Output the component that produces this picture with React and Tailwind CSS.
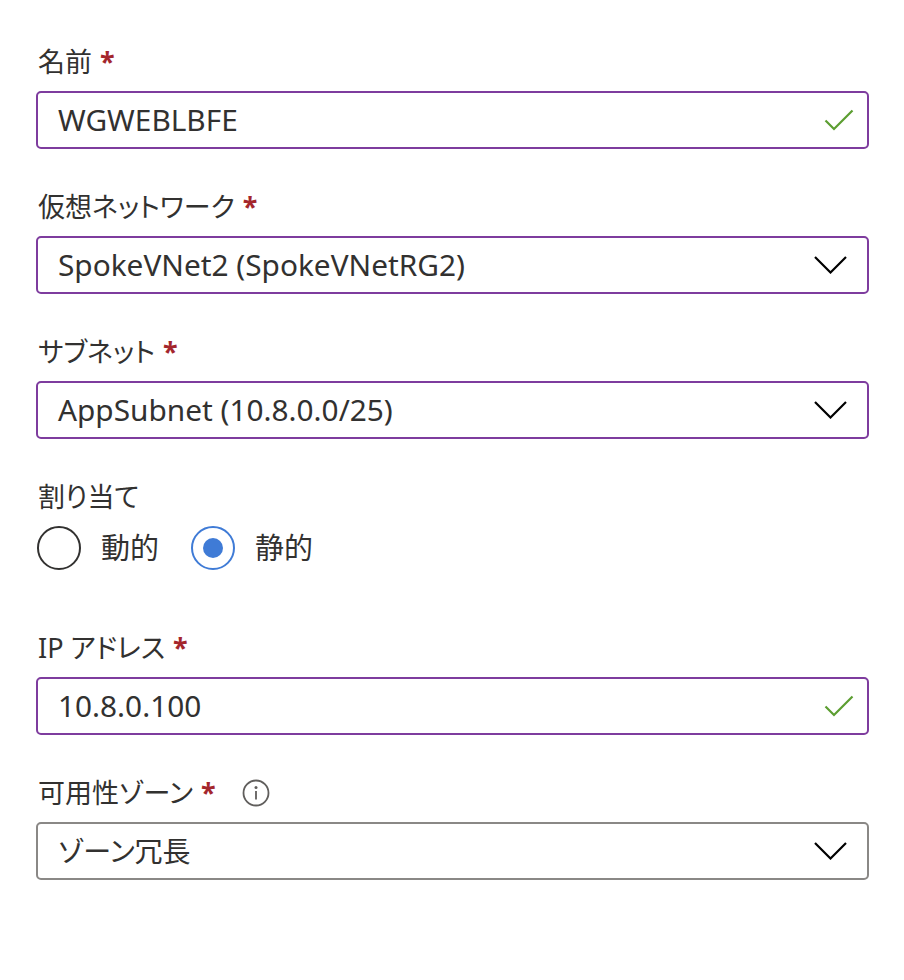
import React from "react";

const font = {
  fontFamily: '"Noto Sans", "Noto Sans CJK JP", sans-serif',
};

function Star() {
  return <span className="ml-[8px] text-[#a4262c] font-bold">*</span>;
}

function Label({ children, required = true, info = false }) {
  return (
    <div className="flex items-center h-[36px] text-[27px] leading-[36px] text-[#323130] [font-feature-settings:'palt']">
      <span>{children}</span>
      {required && <Star />}
      {info && (
        <svg width="28" height="28" viewBox="0 0 28 28" className="ml-[26px]">
          <circle cx="14" cy="14" r="12.5" fill="none" stroke="#605e5c" strokeWidth="1.8" />
          <circle cx="14" cy="8.6" r="1.5" fill="#605e5c" />
          <line x1="14" y1="12" x2="14" y2="20.5" stroke="#605e5c" strokeWidth="1.8" />
        </svg>
      )}
    </div>
  );
}

function Check() {
  return (
    <svg width="30" height="22" viewBox="0 0 30 22" className="mr-[13px]">
      <polyline points="1.5,11.5 10,20 28.5,1.5" fill="none" stroke="#5c9e31" strokeWidth="2.2" />
    </svg>
  );
}

function Chevron() {
  return (
    <svg width="33" height="18" viewBox="0 0 33 18" className="mr-[20px]">
      <polyline points="1,1 16.5,16.5 32,1" fill="none" stroke="#000000" strokeWidth="2.2" />
    </svg>
  );
}

function Box({ children, right, gray = false, cjk = false }) {
  return (
    <div
      className={
        "mt-[11px] h-[58px] w-[833px] rounded-[5px] border-2 flex items-center justify-between pl-[20px] text-[#323130] [font-feature-settings:'palt'] " +
        (cjk ? "text-[28px] " : "text-[29.8px] ") +
        (gray ? "border-[#8a8886]" : "border-[#7e3c9e]")
      }
    >
      <span>{children}</span>
      {right}
    </div>
  );
}

function Radio({ checked, label }) {
  return (
    <div className="flex items-center">
      {checked ? (
        <div className="w-[44px] h-[44px] rounded-full border-2 border-[#3f7bd6] flex items-center justify-center">
          <div className="w-[20px] h-[20px] rounded-full bg-[#3f7bd6]" />
        </div>
      ) : (
        <div className="w-[44px] h-[44px] rounded-full border-2 border-[#323130]" />
      )}
      <span className="ml-[20px] text-[29px] text-[#323130]">{label}</span>
    </div>
  );
}

export default function App() {
  return (
    <div className="w-[904px] h-[980px] bg-white pt-[44px] pl-[36px]" style={font}>
      <div className="pl-[2px]">
        <Label>名前</Label>
      </div>
      <Box right={<Check />}>WGWEBLBFE</Box>

      <div className="mt-[40px] pl-[2px]">
        <Label>仮想ネットワーク</Label>
      </div>
      <Box right={<Chevron />}>SpokeVNet2 (SpokeVNetRG2)</Box>

      <div className="mt-[40px] pl-[2px]">
        <Label>サブネット</Label>
      </div>
      <Box right={<Chevron />}>AppSubnet (10.8.0.0/25)</Box>

      <div className="mt-[40px] pl-[2px]">
        <Label required={false}>割り当て</Label>
      </div>
      <div className="mt-[11px] pl-[1px] flex items-center gap-[32px]">
        <Radio checked={false} label="動的" />
        <Radio checked={true} label="静的" />
      </div>

      <div className="mt-[60px] pl-[2px]">
        <Label>IP アドレス</Label>
      </div>
      <Box right={<Check />}>10.8.0.100</Box>

      <div className="mt-[40px] pl-[2px]">
        <Label info>可用性ゾーン</Label>
      </div>
      <Box gray cjk right={<Chevron />}>ゾーン冗長</Box>
    </div>
  );
}
